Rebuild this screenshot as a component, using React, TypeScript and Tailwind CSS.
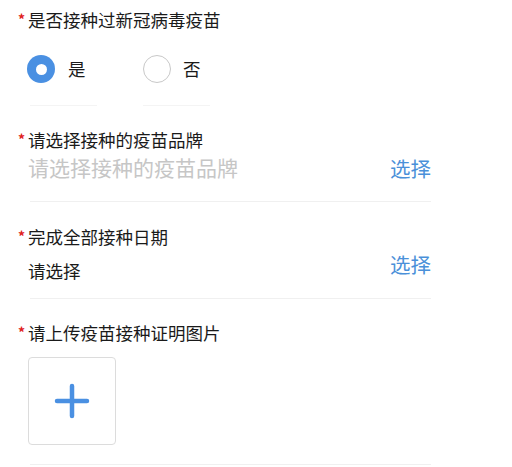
const font = { fontFamily: '"Noto Sans CJK SC", "Noto Sans", sans-serif' };

function Label({ text, className = "" }: { text: string; className?: string }) {
  return (
    <div className={`flex items-start h-[24px] ${className}`}>
      <span className="w-[10px] ml-[18px] mt-[4px] text-[14px] leading-[14px] font-bold text-[#e02020]">*</span>
      <span className="text-[17.5px] leading-[24px] text-[#1a1a1a]">{text}</span>
    </div>
  );
}

export default function App() {
  return (
    <div className="w-[512px] h-[467px] bg-white overflow-hidden pt-[8px]" style={font}>
      {/* 是否接种 */}
      <Label text="是否接种过新冠病毒疫苗" />
      <div className="flex items-center mt-[23px] ml-[27px] h-[28px]">
        <div className="flex items-center w-[116px]">
          <div className="w-[28px] h-[28px] rounded-full bg-[#4a90e2] flex items-center justify-center">
            <div className="w-[11px] h-[11px] rounded-full bg-white" />
          </div>
          <span className="ml-[13px] text-[17.5px] text-[#1a1a1a]">是</span>
        </div>
        <div className="flex items-center">
          <div className="w-[28px] h-[28px] rounded-full border border-[#c8c8c8] bg-white" />
          <span className="ml-[12px] text-[17.5px] text-[#1a1a1a]">否</span>
        </div>
      </div>
      <div className="flex mt-[22px] ml-[30px] gap-[46px]">
        <div className="w-[67px] h-px bg-[#f4f4f4]" />
        <div className="w-[67px] h-px bg-[#f4f4f4]" />
      </div>

      {/* 疫苗品牌 */}
      <Label text="请选择接种的疫苗品牌" className="mt-[22px]" />
      <div className="flex items-center justify-between ml-[28px] w-[403px] h-[28px] mt-[2px]">
        <span className="text-[21px] text-[#c6c6c6]">请选择接种的疫苗品牌</span>
        <span className="text-[20.5px] text-[#4a90d9]">选择</span>
      </div>
      <div className="ml-[30px] w-[401px] h-px bg-[#f0f0f0] mt-[19px]" />

      {/* 接种日期 */}
      <Label text="完成全部接种日期" className="mt-[23px]" />
      <div className="flex items-start justify-between ml-[28px] w-[403px] h-[34px]">
        <span className="text-[17.5px] leading-[24px] text-[#1a1a1a] mt-[10px]">请选择</span>
        <span className="text-[20.5px] leading-[28px] text-[#4a90d9] mt-[1px]">选择</span>
      </div>
      <div className="ml-[30px] w-[401px] h-px bg-[#f0f0f0] mt-[15px]" />

      {/* 证明图片 */}
      <Label text="请上传疫苗接种证明图片" className="mt-[22px]" />
      <div className="ml-[28px] mt-[12px] w-[88px] h-[88px] rounded-[4px] border border-[#dcdcdc] flex items-center justify-center">
        <svg width="38" height="38" viewBox="0 0 38 38">
          <path d="M19 4v30M4 19h30" stroke="#4a90e2" strokeWidth="4.5" strokeLinecap="round" />
        </svg>
      </div>
      <div className="ml-[30px] w-[401px] h-px bg-[#f0f0f0] mt-[19px]" />
    </div>
  );
}
